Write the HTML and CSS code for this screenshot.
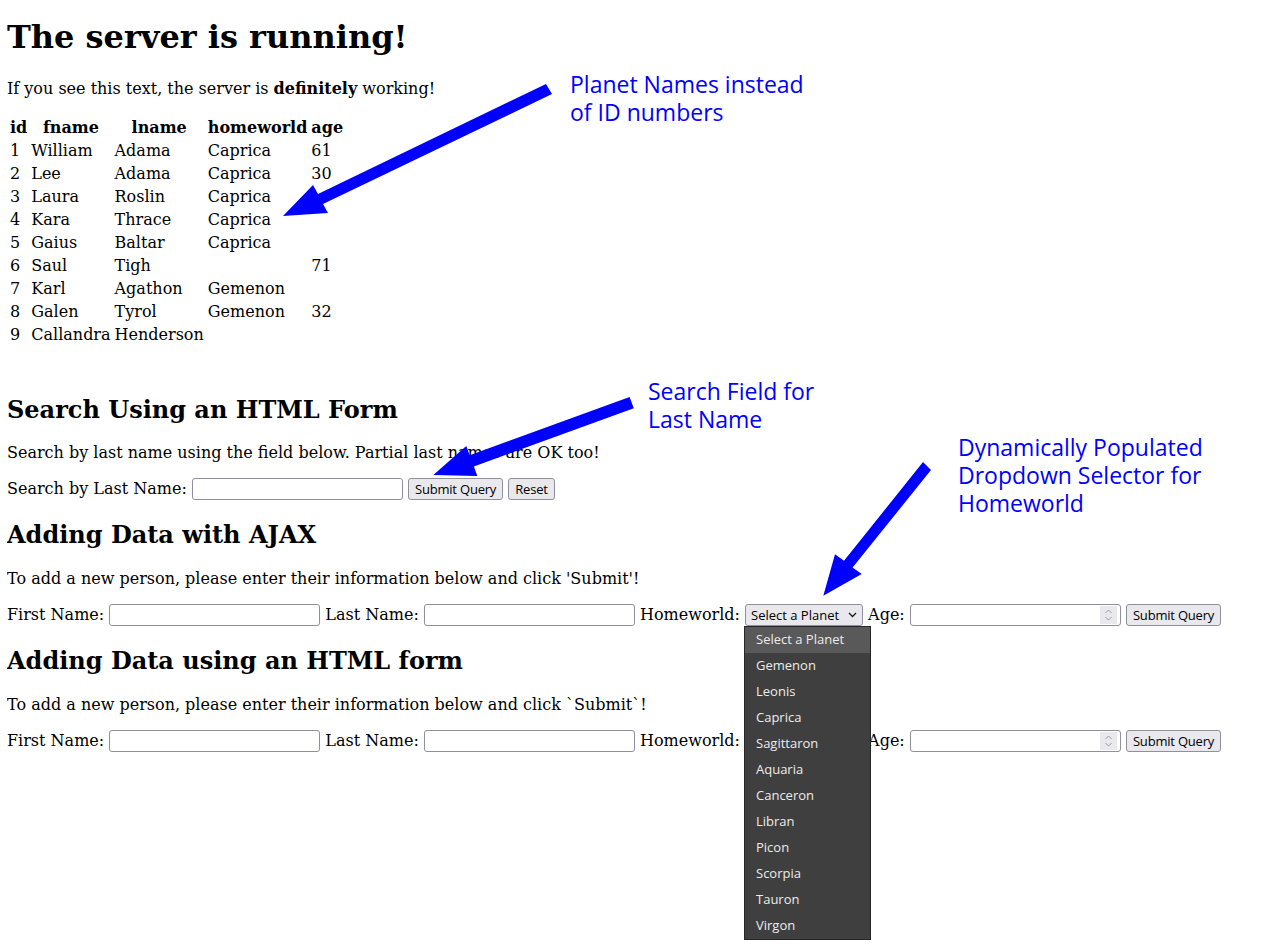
FILE: index.html
```html
<!DOCTYPE html>
<html lang="en">
<head>
<meta charset="utf-8">
<title>Server running</title>
<link rel="stylesheet" href="styles.css">
</head>
<body>
<h1 class="title">The server is running!</h1>
<p class="para">If you see this text, the server is <b>definitely</b> working!</p>

<table class="people">
  <thead>
    <tr><th>id</th><th>fname</th><th>lname</th><th>homeworld</th><th>age</th></tr>
  </thead>
  <tbody>
    <tr><td>1</td><td>William</td><td>Adama</td><td>Caprica</td><td>61</td></tr>
    <tr><td>2</td><td>Lee</td><td>Adama</td><td>Caprica</td><td>30</td></tr>
    <tr><td>3</td><td>Laura</td><td>Roslin</td><td>Caprica</td><td></td></tr>
    <tr><td>4</td><td>Kara</td><td>Thrace</td><td>Caprica</td><td></td></tr>
    <tr><td>5</td><td>Gaius</td><td>Baltar</td><td>Caprica</td><td></td></tr>
    <tr><td>6</td><td>Saul</td><td>Tigh</td><td></td><td>71</td></tr>
    <tr><td>7</td><td>Karl</td><td>Agathon</td><td>Gemenon</td><td></td></tr>
    <tr><td>8</td><td>Galen</td><td>Tyrol</td><td>Gemenon</td><td>32</td></tr>
    <tr><td>9</td><td>Callandra</td><td>Henderson</td><td></td><td></td></tr>
  </tbody>
</table>

<h2 class="section-title">Search Using an HTML Form</h2>
<p class="para">Search by last name using the field below. Partial last names are OK too!</p>
<form class="form-row">
  Search by Last Name: <input class="field" type="text"> <button class="btn" type="button">Submit Query</button> <button class="btn" type="button">Reset</button>
</form>

<h2 class="section-title">Adding Data with AJAX</h2>
<p class="para">To add a new person, please enter their information below and click 'Submit'!</p>
<form class="form-row">
  First Name: <input class="field" type="text"> Last Name: <input class="field" type="text"> Homeworld: <span class="select-wrap"><select class="planet-select"><option>Select a Planet</option></select><svg class="chev" width="9" height="6" viewBox="0 0 9 6"><polyline points="1,1 4.5,4.5 8,1" fill="none" stroke="#1a1a1a" stroke-width="1.3"/></svg></span> Age: <span class="num-wrap"><input class="field num" type="number"><span class="spinner"><svg width="9" height="16" viewBox="0 0 9 16"><polyline points="1.5,6 4.5,3 7.5,6" fill="none" stroke="#9a9aa5" stroke-width="1"/><polyline points="1.5,10 4.5,13 7.5,10" fill="none" stroke="#9a9aa5" stroke-width="1"/></svg></span></span> <button class="btn" type="button">Submit Query</button>
</form>

<h2 class="section-title">Adding Data using an HTML form</h2>
<p class="para">To add a new person, please enter their information below and click `Submit`!</p>
<form class="form-row">
  First Name: <input class="field" type="text"> Last Name: <input class="field" type="text"> Homeworld: <span class="select-wrap"><select class="planet-select"><option>Select a Planet</option></select><svg class="chev" width="9" height="6" viewBox="0 0 9 6"><polyline points="1,1 4.5,4.5 8,1" fill="none" stroke="#1a1a1a" stroke-width="1.3"/></svg></span> Age: <span class="num-wrap"><input class="field num" type="number"><span class="spinner"><svg width="9" height="16" viewBox="0 0 9 16"><polyline points="1.5,6 4.5,3 7.5,6" fill="none" stroke="#9a9aa5" stroke-width="1"/><polyline points="1.5,10 4.5,13 7.5,10" fill="none" stroke="#9a9aa5" stroke-width="1"/></svg></span></span> <button class="btn" type="button">Submit Query</button>
</form>

<svg class="arrows" width="1285" height="950" viewBox="0 0 1285 950">
  <polygon fill="#0000ff" points="546,84 552,94 323,204 328,213 283,216 313,185 318,194"/>
  <polygon fill="#0000ff" points="629.6,397 633.8,408.3 473.9,466.5 477.3,475.9 433.3,475 466.3,445.9 469.7,455.3"/>
  <polygon fill="#0000ff" points="923,462 931,470 852.6,567.6 861.7,574 823.3,595.7 835,554.3 844,560.8"/>
</svg>

<div class="note note-planets">Planet Names instead<br>of ID numbers</div>
<div class="note note-search">Search Field for<br>Last Name</div>
<div class="note note-dropdown">Dynamically Populated<br>Dropdown Selector for<br>Homeworld</div>

<ul class="menu">
  <li class="menu-item active">Select a Planet</li>
  <li class="menu-item">Gemenon</li>
  <li class="menu-item">Leonis</li>
  <li class="menu-item">Caprica</li>
  <li class="menu-item">Sagittaron</li>
  <li class="menu-item">Aquaria</li>
  <li class="menu-item">Canceron</li>
  <li class="menu-item">Libran</li>
  <li class="menu-item">Picon</li>
  <li class="menu-item">Scorpia</li>
  <li class="menu-item">Tauron</li>
  <li class="menu-item">Virgon</li>
</ul>
</body>
</html>
```
FILE: styles.css
```css
html {
  background: #fff;
}

body {
  margin: 8px 8px 8px 7px;
  font-family: "DejaVu Serif", serif;
  font-size: 16px;
  color: #000;
}

.title {
  font-size: 32px;
  font-weight: bold;
  margin: 10px 0 22.5px;
}

.para {
  margin: 16px 0;
}

.people {
  border-spacing: 2px;
  margin-top: 17px;
  margin-bottom: 48px;
}

.people th,
.people td {
  padding: 1px;
}

.section-title {
  font-size: 24px;
  font-weight: bold;
  margin: 19.92px 0;
}

.form-row {
  margin: 0;
}

.field {
  box-sizing: border-box;
  width: 211px;
  height: 22px;
  border: 1px solid #8f8f9d;
  border-radius: 3px;
  padding: 0 4px;
  font: 13px "Open Sans", sans-serif;
  background: #fff;
  vertical-align: middle;
  margin: 0;
}

.num {
  appearance: textfield;
  -moz-appearance: textfield;
}

.num::-webkit-inner-spin-button,
.num::-webkit-outer-spin-button {
  -webkit-appearance: none;
  margin: 0;
}

.num-wrap,
.select-wrap {
  position: relative;
  display: inline-block;
  vertical-align: middle;
  line-height: 0;
}

.spinner {
  position: absolute;
  right: 4px;
  top: 2px;
  width: 17px;
  height: 18px;
  background: #e9e9ed;
  display: flex;
  align-items: center;
  justify-content: center;
}

.btn {
  box-sizing: border-box;
  height: 22px;
  padding: 0 6px;
  border: 1px solid #8f8f9d;
  border-radius: 3px;
  background: #e9e9ed;
  color: #000;
  font: 13px "Open Sans", sans-serif;
  letter-spacing: -0.2px;
  vertical-align: middle;
  margin: 0;
}

.planet-select {
  appearance: none;
  -webkit-appearance: none;
  box-sizing: border-box;
  width: 118px;
  height: 22px;
  margin: 0;
  padding: 0 0 0 5px;
  border: 1px solid #8f8f9d;
  border-radius: 3px;
  background: #e9e9ed;
  color: #000;
  font: 13px "Open Sans", sans-serif;
}

.chev {
  position: absolute;
  right: 6px;
  top: 8px;
}

.arrows {
  position: absolute;
  left: 0;
  top: 0;
  pointer-events: none;
}

.note {
  position: absolute;
  font-family: "Open Sans", sans-serif;
  font-size: 23px;
  line-height: 28px;
  color: #0000ff;
}

.note-planets {
  left: 570px;
  top: 70px;
}

.note-search {
  left: 648px;
  top: 377px;
}

.note-dropdown {
  left: 958px;
  top: 433px;
}

.menu {
  position: absolute;
  left: 744px;
  top: 626px;
  width: 127px;
  box-sizing: border-box;
  margin: 0;
  padding: 0;
  list-style: none;
  background: #3f3f3f;
  border: 1px solid #262626;
}

.menu-item {
  height: 26px;
  padding-left: 11px;
  font: 13px/25px "Open Sans", sans-serif;
  color: #ececec;
}

.menu-item.active {
  background: #595959;
}
```
